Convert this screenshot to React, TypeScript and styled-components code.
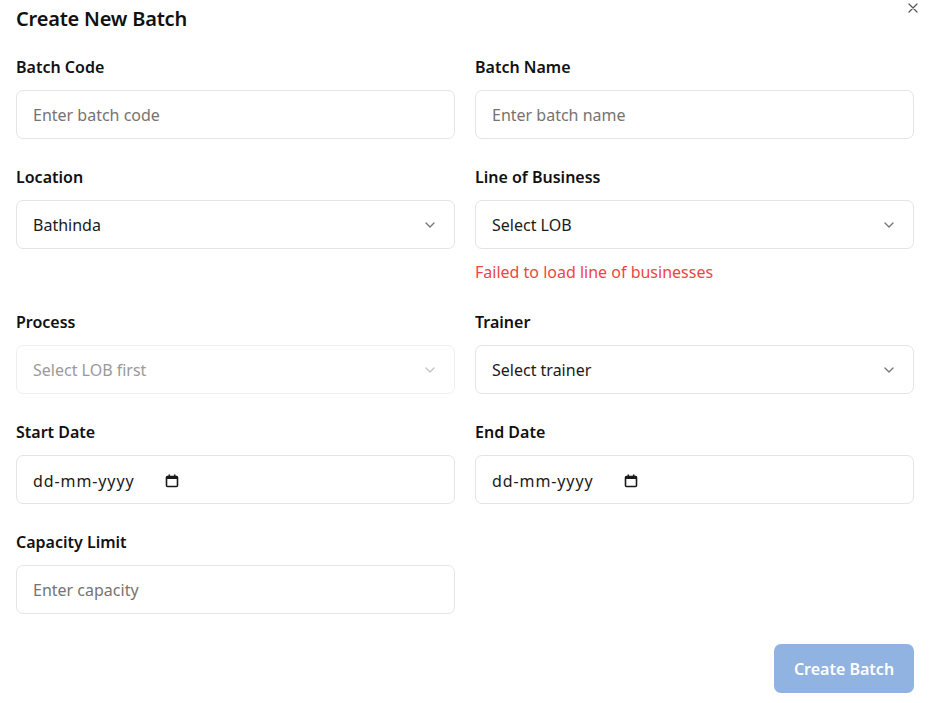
import React from "react";
import styled, { createGlobalStyle } from "styled-components";

const Global = createGlobalStyle`
  html, body { margin: 0; padding: 0; background: #ffffff; }
  body { font-family: "Noto Sans", "Open Sans", sans-serif; color: #0a0a0a; }
  * { box-sizing: border-box; }
`;

const Dialog = styled.div`
  position: relative;
  width: 935px;
  min-height: 703px;
  padding: 4px 21px 0 16px;
  background: #fff;
`;

const Title = styled.h2`
  margin: 0;
  font-size: 20px;
  line-height: 30px;
  font-weight: 600;
  color: #111111;
  letter-spacing: -0.2px;
`;

const Close = styled.button`
  position: absolute;
  top: 0;
  right: 14px;
  width: 16px;
  height: 16px;
  padding: 0;
  border: none;
  background: transparent;
  color: #555;
  display: flex;
  align-items: center;
  justify-content: center;
`;

const Grid = styled.div`
  margin-top: 21px;
  display: grid;
  grid-template-columns: 1fr 1fr;
  column-gap: 20px;
  row-gap: 26px;
  align-items: start;
`;

const Field = styled.div`
  display: flex;
  flex-direction: column;
`;

const Label = styled.label`
  font-size: 16px;
  line-height: 24px;
  font-weight: 600;
  color: #111111;
  margin-bottom: 11px;
`;

const Box = styled.div<{ $disabled?: boolean }>`
  height: 49px;
  border: 1px solid #e4e4e7;
  border-radius: 7px;
  background: #fff;
  display: flex;
  align-items: center;
  justify-content: space-between;
  padding: 0 16px;
  font-size: 16px;
  color: ${(p) => (p.$disabled ? "#9a9a9a" : "#1a1a1a")};
  border-color: ${(p) => (p.$disabled ? "#efefef" : "#e4e4e7")};
`;

const Placeholder = styled.span`
  color: #777370;
`;

const DateText = styled.span`
  display: flex;
  align-items: center;
  gap: 30px;
  color: #1a1a1a;
  letter-spacing: 0.9px;
  padding-top: 2px;
`;

const ErrorText = styled.div`
  margin-top: 11px;
  font-size: 16px;
  line-height: 24px;
  color: #ef4444;
`;

const Footer = styled.div`
  display: flex;
  justify-content: flex-end;
  margin-top: 30px;
`;

const Submit = styled.button`
  width: 140px;
  height: 49px;
  border: none;
  border-radius: 7px;
  background: #91b3e2;
  color: #fff;
  font-family: inherit;
  font-size: 16px;
  font-weight: 600;
`;

const Chevron = ({ light }: { light?: boolean }) => (
  <svg width="16" height="16" viewBox="0 0 24 24" fill="none" stroke={light ? "#c4c4c4" : "#777"} strokeWidth="2" strokeLinecap="round" strokeLinejoin="round">
    <path d="m6 9 6 6 6-6" />
  </svg>
);

const Calendar = () => (
  <svg width="14" height="14" viewBox="0 0 14 14" fill="none">
    <rect x="1.5" y="2.5" width="11" height="10" rx="1" stroke="#1a1a1a" strokeWidth="1.6" />
    <rect x="1.5" y="2.5" width="11" height="2.5" fill="#1a1a1a" />
    <rect x="3.5" y="0.5" width="1.6" height="2.5" fill="#1a1a1a" />
    <rect x="8.9" y="0.5" width="1.6" height="2.5" fill="#1a1a1a" />
  </svg>
);

export default function App() {
  return (
    <>
      <Global />
      <Dialog>
        <Title>Create New Batch</Title>
        <Close aria-label="Close">
          <svg width="18" height="18" viewBox="0 0 24 24" fill="none" stroke="#555" strokeWidth="1.8" strokeLinecap="round">
            <path d="M18 6 6 18M6 6l12 12" />
          </svg>
        </Close>
        <Grid>
          <Field>
            <Label>Batch Code</Label>
            <Box><Placeholder>Enter batch code</Placeholder></Box>
          </Field>
          <Field>
            <Label>Batch Name</Label>
            <Box><Placeholder>Enter batch name</Placeholder></Box>
          </Field>
          <Field>
            <Label>Location</Label>
            <Box>Bathinda<Chevron /></Box>
          </Field>
          <Field>
            <Label>Line of Business</Label>
            <Box>Select LOB<Chevron /></Box>
            <ErrorText>Failed to load line of businesses</ErrorText>
          </Field>
          <Field>
            <Label>Process</Label>
            <Box $disabled>Select LOB first<Chevron light /></Box>
          </Field>
          <Field>
            <Label>Trainer</Label>
            <Box>Select trainer<Chevron /></Box>
          </Field>
          <Field>
            <Label>Start Date</Label>
            <Box><DateText>dd-mm-yyyy<Calendar /></DateText></Box>
          </Field>
          <Field>
            <Label>End Date</Label>
            <Box><DateText>dd-mm-yyyy<Calendar /></DateText></Box>
          </Field>
          <Field>
            <Label>Capacity Limit</Label>
            <Box><Placeholder>Enter capacity</Placeholder></Box>
          </Field>
        </Grid>
        <Footer>
          <Submit>Create Batch</Submit>
        </Footer>
      </Dialog>
    </>
  );
}
